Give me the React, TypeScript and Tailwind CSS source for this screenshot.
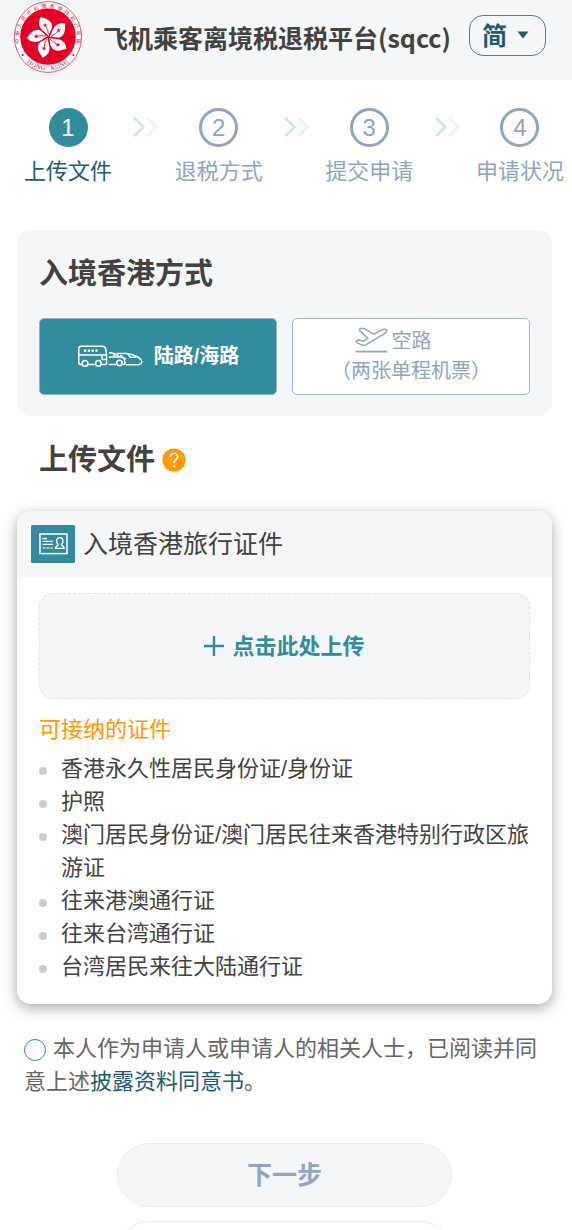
import { useState } from 'react';

const STEPS = ['上传文件', '退税方式', '提交申请', '申请状况'];

const DOCUMENTS = [
  '香港永久性居民身份证/身份证',
  '护照',
  '澳门居民身份证/澳门居民往来香港特别行政区旅游证',
  '往来港澳通行证',
  '往来台湾通行证',
  '台湾居民来往大陆通行证',
];

const RING_TEXT = '中華人民共和國香港特別行政區'.split('');
const RING_NAME = 'HONG KONG'.split('');

function Emblem() {
  return (
    <svg viewBox="0 0 70 74" className="w-[70px] h-[74px] shrink-0" role="img">
      <ellipse cx="35" cy="37" rx="33.6" ry="35.4" fill="#fff" stroke="#e5314b" strokeWidth="0.8" />
      <ellipse cx="35" cy="36.6" rx="27.8" ry="28.2" fill="#e60027" />
      <g fill="#d01c35" fontSize="5.2" fontFamily='"Noto Sans CJK TC", sans-serif' textAnchor="middle">
        {RING_TEXT.map((char, i) => (
          <text key={i} x="0" y="-29" transform={`translate(35 37.2) rotate(${-97.5 + i * 15})`}>
            {char}
          </text>
        ))}
      </g>
      <g fill="#d01c35" fontSize="6.6" fontFamily='"Liberation Serif", serif' textAnchor="middle">
        {RING_NAME.map((char, i) => (
          <text key={i} x="0" y="33.4" transform={`translate(35 37) rotate(${36 - i * 9})`}>
            {char}
          </text>
        ))}
      </g>
      <circle cx="9.6" cy="55" r="1.1" fill="#d01c35" />
      <circle cx="60.4" cy="55" r="1.1" fill="#d01c35" />
      {/* bauhinia petals */}
      <g transform="translate(35.4 37)">
        {[0, 72, 144, 216, 288].map((angle) => (
          <g key={angle} transform={`rotate(${angle})`}>
            <path
              d="M0.3 -1 C-2 -4.5 -9.6 -7.5 -9.4 -14 C-9.4 -16.5 -8.6 -18.6 -7.4 -20.4 C-6.4 -19.2 -4.2 -19.2 -1.6 -17.8 C2.4 -16 4.6 -12.6 3.4 -8.8 C2.4 -5.6 0.8 -4.4 0.3 -1Z"
              fill="#fff"
            />
            <path d="M0 -2.6 C-0.4 -6.4 -1.2 -8.6 -2.8 -10.8" fill="none" stroke="#e60027" strokeWidth="0.8" />
            <path d="M-3.2 -14.2 L-2.6 -12.6 L-1 -12.6 L-2.2 -11.5 L-1.8 -10 L-3.2 -10.9 L-4.6 -10 L-4.2 -11.5 L-5.4 -12.6 L-3.8 -12.6Z" fill="#e60027" />
          </g>
        ))}
      </g>
    </svg>
  );
}

function Chevrons() {
  return (
    <svg viewBox="0 0 30 20" className="w-[30px] h-5 mt-[9px]" fill="none" strokeWidth="2.6">
      <path d="M6.2 0.8 L15.4 10 L6.2 19.2" stroke="#cfe8df" />
      <path d="M19.2 0.8 L28.4 10 L19.2 19.2" stroke="#eaf5f2" />
    </svg>
  );
}

function BusTrainIcon() {
  return (
    <svg viewBox="0 0 66 24" className="w-[66px] h-6" fill="none" stroke="#fff" strokeWidth="1.5" strokeLinejoin="round">
      {/* bus */}
      <path d="M5 19.5 H3.5 Q1.8 19.5 1.8 17.5 V3.5 Q1.8 1.2 4.2 1.2 H25 Q28.4 1.2 28.8 4.5 L29.6 11 V17.5 Q29.6 19.5 27.8 19.5 H24.6 M11 19.5 H18.4 M2 10 H29" />
      <path d="M25 10 V14.5 H29.4" />
      <circle cx="8" cy="18.4" r="2.8" />
      <circle cx="21.4" cy="18.4" r="2.8" />
      <path d="M7 5.6 H21" strokeWidth="2.2" strokeDasharray="2.3 1.5" />
      {/* car */}
      <path d="M32 7.8 C37 7.6 39.5 9 42.5 12 L46 12.8 Q48 14 48 17.5 Q48 19.6 46 19.6 M31.6 19.6 H39 M32 12 H42 M36 8.5 L38 12" />
      <circle cx="42.4" cy="18" r="2.7" />
      {/* train */}
      <path d="M40 8.4 H50 C56 8.6 65 13.6 64.8 17 Q64.4 19.8 60 19.8 H48.8" />
      <path d="M51 8.8 L53 12.2 H58.8 M43 10 L49 14.4" />
    </svg>
  );
}

function PlaneIcon() {
  return (
    <svg viewBox="0 0 34 28" className="w-[34px] h-7" fill="none" stroke="#92a4c2" strokeWidth="1.5" strokeLinejoin="round">
      <path d="M1.2 14 Q2.8 12.4 5.2 13.2 L8.6 14.2 L13 11.4 L4.8 3.6 Q4 2.2 5.8 1.4 Q7.4 0.8 9 1.6 L19 7.2 L26.2 3.2 Q29.4 1.6 31 2.6 Q32.8 4.2 30 6.4 L11.2 17.6 Q8.6 19 6.4 17.8 L1.6 15.4 Q0.6 14.6 1.2 14Z" />
      <path d="M0.6 24.6 H32" strokeWidth="1.8" />
    </svg>
  );
}

function IdCardIcon() {
  return (
    <svg viewBox="0 0 44 38" className="w-11 h-[38px] shrink-0">
      <rect width="44" height="38" rx="1.5" fill="#338b9e" />
      <g fill="none" stroke="#fff">
        <rect x="9" y="9" width="27" height="19.6" strokeWidth="1.5" />
        <path d="M11.5 13.4 H16" strokeWidth="1.5" />
        <path d="M11.5 16.4 H22 M11.5 19.4 H22" strokeWidth="1.3" />
        <path d="M11.5 23 H22" strokeWidth="1.2" strokeDasharray="3 1" />
        <path
          d="M27.2 19.4 C24.8 17.4 25 12.6 28.8 12.6 C32.6 12.6 32.8 17.4 30.4 19.4 C30.2 21 33.2 20.8 33.2 23.4 H24.4 C24.4 20.8 27.4 21 27.2 19.4Z"
          strokeWidth="1.3"
        />
      </g>
    </svg>
  );
}

export default function App() {
  const [agreed, setAgreed] = useState(false);

  return (
    <div className="h-screen overflow-hidden bg-white text-[22px] leading-[33px] text-[#43423e] font-['Liberation_Sans','Noto_Sans_CJK_SC',sans-serif]">
      {/* ── Header ── */}
      <header className="flex items-start h-20 bg-[#f4f6f8] pl-[13px] pr-[26px]">
        <Emblem />
        <h1 className="ml-5 mt-[18px] text-[25px] leading-[38px] font-bold whitespace-nowrap font-['Noto_Sans_CJK_SC',sans-serif]">
          飞机乘客离境税退税平台(sqcc)
        </h1>
        <div className="relative ml-auto mt-[15px] w-[77px]">
          <select
            aria-label="语言"
            className="block w-full h-[41px] appearance-none rounded-[14px] border border-[#4a7f8c] bg-transparent pl-3 text-[25px] leading-9 font-bold text-[#1f5c6b]"
          >
            <option>简</option>
          </select>
          <svg viewBox="0 0 12 8" className="absolute right-[17px] top-4 w-3 h-2 pointer-events-none" fill="#1f5c6b">
            <path d="M0.5 0.5 H11.5 L6 7.5Z" />
          </svg>
        </div>
      </header>

      {/* ── Progress steps ── */}
      <ol className="flex justify-between pt-7 pl-6 pr-2">
        {STEPS.map((label, i) => (
          <li key={label} className="contents">
            {i > 0 && <Chevrons />}
            <div className={`flex flex-col items-center gap-2 ${i === 0 ? 'text-[#1f5c6b]' : 'text-[#92a4c2]'}`}>
              <span
                className={`flex items-center justify-center size-[39px] rounded-full text-[24px] ${
                  i === 0 ? 'bg-[#338b9e] text-white' : 'border-3 border-[#92a4c2]'
                }`}
              >
                {i + 1}
              </span>
              <span className="whitespace-nowrap">{label}</span>
            </div>
          </li>
        ))}
      </ol>

      <main className="pt-[42px] pl-[17px] pr-5">
        {/* ── Entry method ── */}
        <section className="rounded-[14px] bg-[#f4f6f8] px-[22px] pt-[22px] pb-[21px]">
          <h2 className="text-[29px] leading-[44px] font-bold">入境香港方式</h2>
          <div className="grid grid-cols-2 gap-[15px] mt-[22px]">
            <button className="flex items-center justify-center gap-[11px] h-[77px] rounded-[5px] border border-[#92b4c2] bg-[#338b9e] text-[20px] font-bold text-white">
              <BusTrainIcon />
              陆路/海路
            </button>
            <button className="flex flex-col items-center h-[77px] rounded-[5px] border border-[#a5b4cd] bg-white pt-[7px] text-[20px] leading-[30px] text-[#92a4c2]">
              <span className="flex items-center gap-[3px] pr-9">
                <PlaneIcon />
                空路
              </span>
              <span>（两张单程机票）</span>
            </button>
          </div>
        </section>

        {/* ── Upload ── */}
        <div className="flex items-center gap-[7px] mt-[22px] pl-[22px]">
          <h2 className="text-[29px] leading-[44px] font-bold">上传文件</h2>
          <button aria-label="帮助">
            <svg viewBox="0 0 24 24" className="size-6" fill="none">
              <circle cx="12" cy="12" r="11.6" fill="#ff9900" />
              <path d="M8.4 9.2 C8.4 4.2 15.8 4.4 15.6 8.8 C15.5 11.6 12 11.6 12 15.2" stroke="#fff" strokeWidth="1.7" />
              <circle cx="12" cy="18.4" r="1.2" fill="#fff" />
            </svg>
          </button>
        </div>

        <section className="mt-[29px] overflow-hidden rounded-[14px] bg-white shadow-[0_4px_14px_rgba(0,0,0,0.35)]">
          <div className="flex items-center gap-2 h-[66px] bg-[#f4f6f8] pl-[14px]">
            <IdCardIcon />
            <h3 className="text-[25px]">入境香港旅行证件</h3>
          </div>
          <div className="px-[22px] pt-4 pb-[21px]">
            <button className="flex items-center justify-center gap-2 w-full h-[106px] rounded-[14px] border border-dashed border-[#dfe3e6] bg-[#f4f6f8] font-bold text-[#338b9e]">
              <svg viewBox="0 0 20 20" className="size-5" stroke="#338b9e" strokeWidth="2.4">
                <path d="M10 0 V20 M0 10 H20" />
              </svg>
              点击此处上传
            </button>
            <h4 className="mt-[14px] text-[#ff9900]">可接纳的证件</h4>
            <ul className="mt-[6px]">
              {DOCUMENTS.map((doc) => (
                <li key={doc} className="flex items-start gap-[14px]">
                  <span className="mt-[15px] size-2 shrink-0 rounded-full bg-[#cccccc]" />
                  <span>{doc}</span>
                </li>
              ))}
            </ul>
          </div>
        </section>

        {/* ── Consent ── */}
        <p className="mt-7 pl-[7px] pr-[11px] text-[#666666]">
          <input
            id="consent"
            type="checkbox"
            checked={agreed}
            onChange={() => setAgreed(!agreed)}
            className="mr-[7px] size-[22px] appearance-none rounded-full border border-[#338b9e] bg-white align-middle checked:bg-[#338b9e]"
          />
          <label htmlFor="consent">本人作为申请人或申请人的相关人士，已阅读并同意上述</label>
          <a href="#" className="text-[#1f5c6b]">披露资料同意书</a>。
        </p>

        <div className="flex flex-col items-center gap-[14px] mt-[45px]">
          <button className="w-[335px] h-16 rounded-full border border-[#eceeee] bg-[#f4f6f8] text-[25px] font-bold text-[#92a4c2]">
            下一步
          </button>
          <button aria-label="返回" className="w-[335px] h-16 rounded-full border border-[#eceeee] bg-white" />
        </div>
      </main>
    </div>
  );
}
